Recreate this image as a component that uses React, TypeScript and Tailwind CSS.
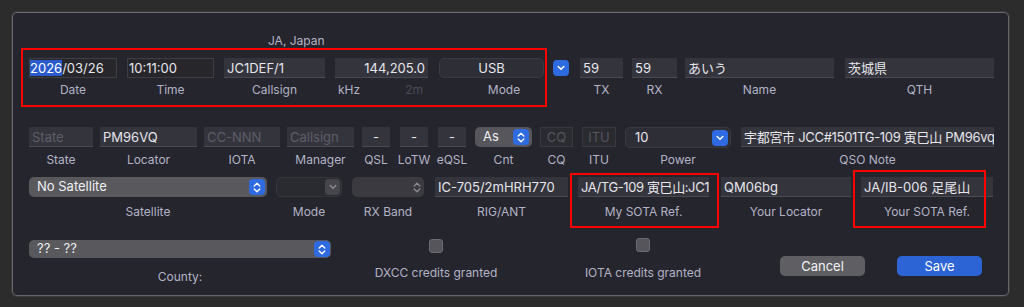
import type { ReactNode } from "react";

// macOS-style QSO edit sheet (dark appearance) with red callout boxes.

function Stepper({ color = "white" }: { color?: string }) {
  return (
    <svg width="8" height="11" viewBox="0 0 8 11">
      <path d="M1.2 4 L4 1.3 L6.8 4 M1.2 7 L4 9.7 L6.8 7" stroke={color} strokeWidth="1.4" fill="none" strokeLinecap="round" strokeLinejoin="round" />
    </svg>
  );
}

function Chevron({ color = "white" }: { color?: string }) {
  return (
    <svg width="8" height="6" viewBox="0 0 8 6">
      <path d="M1.2 1.5 L4 4.3 L6.8 1.5" stroke={color} strokeWidth="1.5" fill="none" strokeLinecap="round" strokeLinejoin="round" />
    </svg>
  );
}

function BlueKnob({ children, className = "" }: { children: ReactNode; className?: string }) {
  return (
    <span className={`flex h-[16px] w-[16px] items-center justify-center rounded-[4px] bg-[#2e6ae0] ${className}`}>{children}</span>
  );
}

function Label({ children, className = "" }: { children: ReactNode; className?: string }) {
  return <div className={`whitespace-nowrap text-[12px] leading-[14px] text-[#b3b3c6] ${className}`}>{children}</div>;
}

function Box({ children, className = "", dim }: { children?: ReactNode; className?: string; dim?: boolean }) {
  return (
    <div
      className={`h-[20px] w-full overflow-hidden whitespace-nowrap border-b border-[#4a4a52] bg-[#34343c] px-[3px] text-[13px] leading-[20px] ${dim ? "text-[#5e5e68]" : "text-[#e6e6ec]"} ${className}`}
    >
      {children}
    </div>
  );
}

function Col({ children, className = "" }: { children: ReactNode; className?: string }) {
  return <div className={`flex shrink-0 flex-col items-center ${className}`}>{children}</div>;
}

export default function App() {
  return (
    <div className="relative h-[307px] w-[1024px] overflow-hidden bg-[#2c2c2c] pt-[12px] pl-[12px] font-['Inter','Noto_Sans_CJK_JP',sans-serif]">
      <div className="h-[284px] w-[997px] rounded-[5px] border border-[#68686c] bg-[#25252d] pl-[16px] shadow-[0_0_0_1px_#3a3a3c]">
        {/* country */}
        <div className="mt-[21px] ml-[239px] text-[12px] leading-[14px] text-[#b3b3c6]">JA, Japan</div>

        {/* row 1 */}
        <div className="mt-[10px] flex items-start">
          <Col className="w-[88px]">
            <div className="h-[20px] w-full whitespace-nowrap border border-[#3e3e44] bg-[#27272b] text-[13px] leading-[18px] text-[#e6e6ec]">
              <span className="bg-[#2a5bcc] text-white">2026</span>/03/26
            </div>
            <Label className="mt-[5px]">Date</Label>
          </Col>
          <Col className="ml-[10px] w-[87px]">
            <div className="h-[20px] w-full whitespace-nowrap border border-[#3e3e44] bg-[#27272b] pl-[1px] text-[13px] leading-[18px] text-[#e6e6ec]">10:11:00</div>
            <Label className="mt-[5px]">Time</Label>
          </Col>
          <Col className="ml-[10px] w-[101px]">
            <Box>JC1DEF/1</Box>
            <Label className="mt-[5px]">Callsign</Label>
          </Col>
          <Col className="ml-[10px] w-[93px]">
            <Box className="text-right">144,205.0</Box>
            <div className="mt-[5px] flex w-full justify-between pr-[5px] pl-[3px] text-[12px] leading-[14px]">
              <span className="text-[#b3b3c6]">kHz</span>
              <span className="text-[#4c4c57]">2m</span>
            </div>
          </Col>
          <Col className="ml-[11px] w-[130px]">
            <div className="flex w-full items-center">
              <div className="h-[20px] w-[106px] rounded-[5px] border border-[#3a3a42] bg-[#2e2e36] text-center text-[13px] leading-[18px] text-[#e6e6ec]">USB</div>
              <BlueKnob className="ml-[9px]">
                <Chevron />
              </BlueKnob>
            </div>
            <Label className="mt-[5px]">Mode</Label>
          </Col>
          <Col className="ml-[11px] w-[43px]">
            <Box>59</Box>
            <Label className="mt-[5px]">TX</Label>
          </Col>
          <Col className="ml-[9px] w-[45px]">
            <Box>59</Box>
            <Label className="mt-[5px]">RX</Label>
          </Col>
          <Col className="ml-[8px] w-[149px]">
            <Box>あいう</Box>
            <Label className="mt-[5px]">Name</Label>
          </Col>
          <Col className="ml-[11px] w-[149px]">
            <Box>茨城県</Box>
            <Label className="mt-[5px]">QTH</Label>
          </Col>
        </div>

        {/* row 2 */}
        <div className="mt-[30px] flex items-start">
          <Col className="w-[64px]">
            <Box dim>State</Box>
            <Label className="mt-[6px]">State</Label>
          </Col>
          <Col className="ml-[7px] w-[97px]">
            <Box>PM96VQ</Box>
            <Label className="mt-[6px]">Locator</Label>
          </Col>
          <Col className="ml-[7px] w-[76px]">
            <Box dim>CC-NNN</Box>
            <Label className="mt-[6px]">IOTA</Label>
          </Col>
          <Col className="ml-[7px] w-[67px]">
            <Box dim>Callsign</Box>
            <Label className="mt-[6px]">Manager</Label>
          </Col>
          <Col className="ml-[8px] w-[28px]">
            <Box className="text-center">-</Box>
            <Label className="mt-[6px]">QSL</Label>
          </Col>
          <Col className="ml-[10px] w-[28px]">
            <Box className="text-center">-</Box>
            <Label className="mt-[6px]">LoTW</Label>
          </Col>
          <Col className="ml-[10px] w-[28px]">
            <Box className="text-center">-</Box>
            <Label className="mt-[6px]">eQSL</Label>
          </Col>
          <Col className="ml-[9px] w-[57px]">
            <div className="flex h-[20px] w-full items-center justify-between rounded-[5px] bg-[#56565c] pr-[3px] pl-[8px] text-[13px] text-[#f0f0f4]">
              <span>As</span>
              <BlueKnob>
                <Stepper />
              </BlueKnob>
            </div>
            <Label className="mt-[6px]">Cnt</Label>
          </Col>
          <Col className="ml-[8px] w-[33px]">
            <div className="h-[20px] w-full border border-[#393940] bg-[#2a2a31] text-center text-[13px] leading-[18px] text-[#55555f]">CQ</div>
            <Label className="mt-[6px]">CQ</Label>
          </Col>
          <Col className="ml-[9px] w-[34px]">
            <div className="h-[20px] w-full border border-[#393940] bg-[#2a2a31] text-center text-[13px] leading-[18px] text-[#55555f]">ITU</div>
            <Label className="mt-[6px]">ITU</Label>
          </Col>
          <Col className="ml-[9px] w-[106px]">
            <div className="flex h-[21px] w-full items-center justify-between rounded-[5px] border border-[#3a3a42] bg-[#2e2e36] pr-[2px] pl-[9px] text-[13px] text-[#e6e6ec]">
              <span>10</span>
              <BlueKnob>
                <Chevron />
              </BlueKnob>
            </div>
            <Label className="mt-[5px]">Power</Label>
          </Col>
          <Col className="ml-[10px] w-[253px]">
            <Box className="text-[12.5px] tracking-[-0.3px]">宇都宮市 JCC#1501TG-109 寅巳山 PM96vq</Box>
            <Label className="mt-[6px]">QSO Note</Label>
          </Col>
        </div>

        {/* row 3 */}
        <div className="mt-[10px] flex items-start">
          <Col className="w-[238px]">
            <div className="flex h-[20px] w-full items-center justify-between rounded-[5px] bg-[#58585d] pr-[2px] pl-[8px] text-[13px] text-[#f0f0f4]">
              <span>No Satellite</span>
              <BlueKnob>
                <Stepper />
              </BlueKnob>
            </div>
            <Label className="mt-[8px]">Satellite</Label>
          </Col>
          <Col className="ml-[9px] w-[66px]">
            <div className="flex h-[20px] w-full items-center justify-end rounded-[5px] border border-[#34343b] bg-[#2a2a31] pr-[1px]">
              <span className="flex h-[16px] w-[15px] items-center justify-center rounded-[4px] bg-[#46464c]">
                <Chevron color="#8a8a92" />
              </span>
            </div>
            <Label className="mt-[8px]">Mode</Label>
          </Col>
          <Col className="ml-[10px] w-[72px]">
            <div className="flex h-[20px] w-full items-center justify-end rounded-[5px] bg-[#3a3a40] pr-[3px]">
              <Stepper color="#8a8a92" />
            </div>
            <Label className="mt-[8px]">RX Band</Label>
          </Col>
          <Col className="ml-[11px] w-[133px]">
            <Box>IC-705/2mHRH770</Box>
            <Label className="mt-[8px]">RIG/ANT</Label>
          </Col>
          <Col className="ml-[10px] w-[131px]">
            <Box className="px-[2px] text-[12.5px] tracking-[-0.4px]">JA/TG-109 寅巳山:JC1</Box>
            <Label className="mt-[8px]">My SOTA Ref.</Label>
          </Col>
          <Col className="ml-[12px] w-[130px]">
            <Box>QM06bg</Box>
            <Label className="mt-[8px]">Your Locator</Label>
          </Col>
          <Col className="ml-[10px] w-[132px]">
            <Box>JA/IB-006 足尾山</Box>
            <Label className="mt-[8px]">Your SOTA Ref.</Label>
          </Col>
        </div>

        {/* row 4 */}
        <div className="mt-[19px] flex items-start">
          <Col className="w-[302px]">
            <div className="mt-[2px] flex h-[18px] w-full items-center justify-between rounded-[5px] bg-[#58585d] pr-[1px] pl-[8px] text-[13px] text-[#f0f0f4]">
              <span>?? - ??</span>
              <BlueKnob>
                <Stepper />
              </BlueKnob>
            </div>
            <Label className="mt-[12px]">County:</Label>
          </Col>
          <Col className="ml-[30px] w-[150px]">
            <div className="mt-[1px] h-[14px] w-[14px] rounded-[3px] border border-[#6a6a70] bg-[#55555b]" />
            <Label className="mt-[13px]">DXCC credits granted</Label>
          </Col>
          <Col className="ml-[57px] w-[150px]">
            <div className="h-[14px] w-[14px] rounded-[3px] border border-[#6a6a70] bg-[#55555b]" />
            <Label className="mt-[14px]">IOTA credits granted</Label>
          </Col>
          <button className="mt-[18px] ml-[62px] h-[20px] w-[85px] rounded-[5px] bg-[#5e5e63] text-[13px] leading-[20px] text-[#f2f2f4]">Cancel</button>
          <button className="mt-[18px] ml-[32px] h-[20px] w-[85px] rounded-[5px] bg-[#2c63d5] text-[13px] leading-[20px] text-white">Save</button>
        </div>
      </div>

      {/* red callouts */}
      <div className="pointer-events-none absolute top-[48px] left-[21px] h-[59px] w-[526px] border-2 border-[#ff0000]" />
      <div className="pointer-events-none absolute top-[173px] left-[570px] h-[55px] w-[149px] border-2 border-[#ff0000]" />
      <div className="pointer-events-none absolute top-[170px] left-[853px] h-[58px] w-[133px] border-2 border-[#ff0000]" />
    </div>
  );
}
